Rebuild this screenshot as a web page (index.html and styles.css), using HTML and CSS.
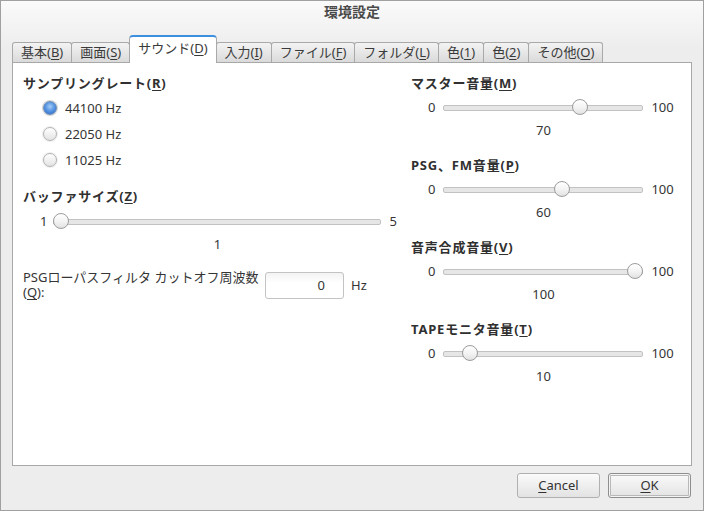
FILE: index.html
```html
<!DOCTYPE html>
<html lang="ja">
<head>
<meta charset="utf-8">
<title>環境設定</title>
<link rel="stylesheet" href="styles.css">
</head>
<body>
<div class="window">
  <div class="titlebar">環境設定</div>
  <div class="tabs">
    <div class="tab">基本(<u>B</u>)</div>
    <div class="tab">画面(<u>S</u>)</div>
    <div class="tab active">サウンド(<u>D</u>)</div>
    <div class="tab">入力(<u>I</u>)</div>
    <div class="tab">ファイル(<u>F</u>)</div>
    <div class="tab">フォルダ(<u>L</u>)</div>
    <div class="tab">色(<u>1</u>)</div>
    <div class="tab">色(<u>2</u>)</div>
    <div class="tab">その他(<u>O</u>)</div>
  </div>
  <div class="panel">
    <div class="col left">
      <div class="heading">サンプリングレート(<u>R</u>)</div>
      <div class="radios">
        <div class="radio-row"><span class="radio checked"></span><span>44100 Hz</span></div>
        <div class="radio-row"><span class="radio"></span><span>22050 Hz</span></div>
        <div class="radio-row"><span class="radio"></span><span>11025 Hz</span></div>
      </div>
      <div class="heading mt15">バッファサイズ(<u>Z</u>)</div>
      <div class="slider wide">
        <span class="min">1</span>
        <div class="track"><span class="handle" style="--v:0"></span></div>
        <span class="max">5</span>
        <span class="value">1</span>
      </div>
      <div class="filter-row">
        <div class="filter-label">
          <div class="fl-line">PSGローパスフィルタ カットオフ周波数</div>
          <div class="fl-line">(<u>Q</u>):</div>
        </div>
        <div class="input">0</div>
        <span class="unit">Hz</span>
      </div>
    </div>
    <div class="col right">
      <div class="section">
        <div class="heading">マスター音量(<u>M</u>)</div>
        <div class="slider">
          <span class="min">0</span>
          <div class="track"><span class="handle" style="--v:0.7"></span></div>
          <span class="max">100</span>
          <span class="value">70</span>
        </div>
      </div>
      <div class="section">
        <div class="heading">PSG、FM音量(<u>P</u>)</div>
        <div class="slider">
          <span class="min">0</span>
          <div class="track"><span class="handle" style="--v:0.6"></span></div>
          <span class="max">100</span>
          <span class="value">60</span>
        </div>
      </div>
      <div class="section">
        <div class="heading">音声合成音量(<u>V</u>)</div>
        <div class="slider">
          <span class="min">0</span>
          <div class="track"><span class="handle" style="--v:1"></span></div>
          <span class="max">100</span>
          <span class="value">100</span>
        </div>
      </div>
      <div class="section">
        <div class="heading">TAPEモニタ音量(<u>T</u>)</div>
        <div class="slider">
          <span class="min">0</span>
          <div class="track"><span class="handle" style="--v:0.1"></span></div>
          <span class="max">100</span>
          <span class="value">10</span>
        </div>
      </div>
    </div>
  </div>
  <div class="buttons">
    <div class="btn"><u>C</u>ancel</div>
    <div class="btn default"><u>O</u>K</div>
  </div>
</div>
</body>
</html>
```

FILE: styles.css
```css
* { box-sizing: border-box; }
html, body { margin: 0; padding: 0; }
body {
  font-family: "Noto Sans", "Noto Sans CJK JP", sans-serif;
  font-size: 13px;
  line-height: 16px;
  color: #353535;
}
u { text-decoration: underline; text-underline-offset: 2px; }

.window {
  width: 704px;
  height: 511px;
  border: 1px solid #a0a0a0;
  background: linear-gradient(#fafafa 0, #ededed 48px, #ededed 100%);
  display: flex;
  flex-direction: column;
}

.titlebar {
  height: 34px;
  padding-top: 3px;
  text-align: center;
  font-weight: bold;
  font-size: 14px;
  line-height: 16px;
  color: #4a4a4a;
}

.tabs {
  height: 27px;
  margin-left: 11px;
  display: flex;
  align-items: flex-end;
  position: relative;
  z-index: 1;
}
.tab {
  height: 20px;
  padding: 0 8px;
  border: 1px solid #a9a9a9;
  border-bottom: none;
  border-radius: 3px 3px 0 0;
  background: linear-gradient(#f3f3f3, #dadada);
  line-height: 19px;
  white-space: nowrap;
  color: #3a3a3a;
}
.tab + .tab { margin-left: -1px; }
.tab.active {
  height: 28px;
  margin-bottom: -1px;
  padding: 0 8px 4px;
  background: #fff;
  border-color: #a9a9a9;
  border-top: 2px solid #3f8fdf;
  border-radius: 4px 4px 0 0;
  line-height: 22px;
}

.panel {
  height: 404px;
  margin: 0 11px;
  border: 1px solid #a8a8a8;
  background: #fff;
  padding: 12px 0 0 10px;
  display: flex;
  gap: 10px;
}
.col.left { width: 378px; }
.col.right { width: 270px; }

.heading {
  font-weight: bold;
  height: 16px;
  white-space: nowrap;
  letter-spacing: 0.8px;
  color: #303030;
}
.mt15 { margin-top: 15px; }

.radios { margin-top: 4px; }
.radio-row {
  height: 26px;
  display: flex;
  align-items: center;
  padding-left: 20px;
  gap: 8px;
}
.radio {
  width: 14px;
  height: 14px;
  border-radius: 50%;
  border: 1px solid #b2b2b2;
  background: linear-gradient(#ffffff, #e3e3e3);
  box-shadow: 0 0 0 1px #efefef;
}
.radio.checked {
  border-color: #6d8db5;
  background: radial-gradient(circle at 50% 38%, #a6cdf6 0, #5b98e4 45%, #3a75cf 80%);
  box-shadow: 0 0 0 1px #d4d4d4;
}

.slider {
  margin-top: 6px;
  padding-left: 17px;
  display: grid;
  grid-template-columns: auto 200px auto;
  grid-template-rows: 20px 16px;
  column-gap: 8px;
  row-gap: 5px;
  align-items: center;
  justify-content: start;
}
.slider.wide {
  margin-top: 7px;
  grid-template-columns: auto 328px auto;
  column-gap: 6px;
}
.slider.wide .max { margin-left: 2px; }
.slider .value {
  grid-column: 2;
  grid-row: 2;
  text-align: center;
}
.track {
  position: relative;
  height: 20px;
}
.track::before {
  content: "";
  position: absolute;
  left: 0;
  right: 0;
  top: 8px;
  height: 4px;
  border-radius: 2px;
  border: 1px solid #c2c2c2;
  background: #e6e6e6;
}
.handle {
  position: absolute;
  top: 2px;
  left: calc(var(--v) * (100% - 16px));
  width: 16px;
  height: 16px;
  border-radius: 50%;
  border: 1px solid #9c9c9c;
  background: linear-gradient(#ffffff 0, #f4f4f4 50%, #e2e2e2 100%);
}

.section + .section { margin-top: 19px; }

.filter-row {
  margin-top: 18px;
  display: flex;
  align-items: center;
}
.filter-label {
  width: 242px;
  white-space: nowrap;
}
.fl-line { height: 15px; line-height: 15px; }
.input {
  width: 79px;
  height: 27px;
  border: 1px solid #c3c3c3;
  border-radius: 3px;
  background: linear-gradient(#f3f3f3, #ffffff 40%);
  text-align: right;
  padding-right: 18px;
  line-height: 25px;
}
.unit { margin-left: 7px; }

.buttons {
  display: flex;
  justify-content: flex-end;
  gap: 8px;
  margin-top: 7px;
  padding-right: 12px;
}
.btn {
  width: 83px;
  height: 25px;
  border: 1px solid #b0b0b0;
  border-radius: 3px;
  background: linear-gradient(#fafafa, #e3e3e3);
  text-align: center;
  line-height: 23px;
  color: #333;
}
.btn.default {
  border-color: #8e8e8e;
  box-shadow: inset 0 0 0 1px #f4f4f4, inset 0 0 0 2px #b8b8b8;
}
```
